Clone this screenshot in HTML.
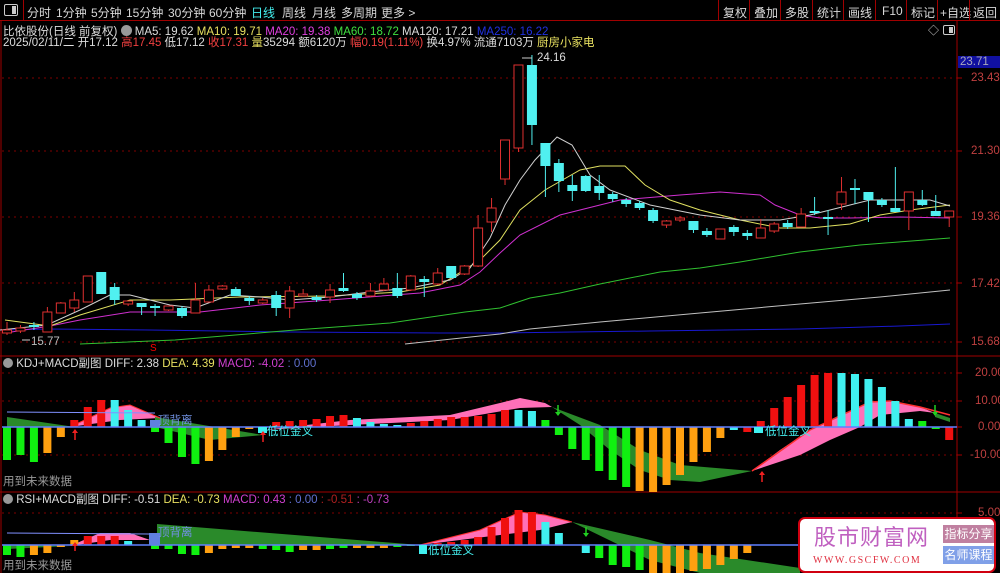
<!DOCTYPE html>
<html><head><meta charset="utf-8">
<style>
*{margin:0;padding:0;box-sizing:border-box}
body{width:1000px;height:573px;background:#000;overflow:hidden;position:relative;font-family:"Liberation Sans","Noto Sans CJK SC",sans-serif;font-size:11.5px;color:#ddd}
.t{position:absolute;white-space:nowrap;line-height:12px}
#tb{position:absolute;left:0;top:0;width:1000px;height:21px;border-bottom:1px solid #a00000;background:#000}
#tb span{position:absolute;top:4px;font-size:12px;color:#d8d8d8}
.rb{position:absolute;top:0;height:21px;border-left:1px solid #a00000}
svg{position:absolute;left:0;top:0}
</style></head><body>
<div id="tb">
<div style="position:absolute;left:4px;top:4px;width:14px;height:12px;border:1px solid #ccc;border-radius:2px"><div style="position:absolute;right:1px;top:1px;width:4px;height:8px;background:#ccc"></div></div>
<div class="rb" style="left:23px"></div>
<span style="left:27px">分时</span><span style="left:56px">1分钟</span><span style="left:91px">5分钟</span><span style="left:126px">15分钟</span><span style="left:168px">30分钟</span><span style="left:209px">60分钟</span><span style="left:251px;color:#4ee">日线</span><span style="left:282px">周线</span><span style="left:312px">月线</span><span style="left:341px">多周期</span><span style="left:381px">更多 &gt;</span>
<div class="rb" style="left:718px"></div><span style="left:723px">复权</span>
<div class="rb" style="left:749px"></div><span style="left:754px">叠加</span>
<div class="rb" style="left:780px"></div><span style="left:785px">多股</span>
<div class="rb" style="left:812px"></div><span style="left:817px">统计</span>
<div class="rb" style="left:843px"></div><span style="left:848px">画线</span>
<div class="rb" style="left:875px"></div><span style="left:882px">F10</span>
<div class="rb" style="left:906px"></div><span style="left:911px">标记</span>
<div class="rb" style="left:937px"></div><span style="left:940px">+自选</span>
<div class="rb" style="left:969px"></div><span style="left:973px">返回</span>
</div>
<svg id="s" width="1000" height="573" viewBox="0 0 1000 573"></svg>
<div class="t" style="left:3px;top:25px">比依股份(日线 前复权) <span style="display:inline-block;width:11px;height:11px;border-radius:50%;background:#999;vertical-align:-1px"></span> MA5: 19.62 <span style="color:#e8e060">MA10: 19.71</span> <span style="color:#e040e0">MA20: 19.38</span> <span style="color:#40e040">MA60: 18.72</span> MA120: 17.21 <span style="color:#2030e0">MA250: 16.22</span></div>
<div class="t" style="left:3px;top:37px">2025/02/11/二 开17.12 <span style="color:#f04040">高17.45</span> 低17.12 <span style="color:#f04040">收17.31</span> <span style="color:#e8e060">量</span>35294 额6120万 <span style="color:#f04040">幅0.19(1.11%)</span> 换4.97% 流通7103万 <span style="color:#e8e060">厨房小家电</span></div>
<div class="t" style="left:928px;top:25px;color:#ccc;font-size:11px">◇</div>
<div style="position:absolute;left:943px;top:25px;width:12px;height:10px;border:1px solid #ccc;border-radius:2px"><div style="position:absolute;right:1px;top:1px;width:4px;height:6px;background:#ccc"></div></div>
<div class="t" style="left:958px;top:56px;width:42px;height:12px;background:#1010a0;color:#aab;padding-left:2px">23.71</div>
<div class="t" style="left:971px;top:72px;color:#c04040">23.43</div>
<div class="t" style="left:971px;top:145px;color:#c04040">21.30</div>
<div class="t" style="left:971px;top:211px;color:#c04040">19.36</div>
<div class="t" style="left:971px;top:278px;color:#c04040">17.42</div>
<div class="t" style="left:971px;top:336px;color:#c04040">15.68</div>
<div class="t" style="left:537px;top:52px;color:#ddd">24.16</div>
<div class="t" style="left:31px;top:336px;color:#bbb">15.77</div>
<div class="t" style="left:150px;top:343px;color:#f00;font-size:10px">S</div>
<div class="t" style="left:3px;top:358px"><span style="display:inline-block;width:10px;height:10px;border-radius:50%;background:#999;vertical-align:-1px"></span> KDJ+MACD副图 DIFF: 2.38 <span style="color:#e8e060">DEA: 4.39</span> <span style="color:#d040d0">MACD: -4.02</span> <span style="color:#6070d0">: 0.00</span></div>
<div class="t" style="left:3px;top:476px;color:#999">用到未来数据</div>
<div class="t" style="left:3px;top:494px"><span style="display:inline-block;width:10px;height:10px;border-radius:50%;background:#999;vertical-align:-1px"></span> RSI+MACD副图 DIFF: -0.51 <span style="color:#e8e060">DEA: -0.73</span> <span style="color:#d040d0">MACD: 0.43</span> <span style="color:#6070d0">: 0.00</span> <span style="color:#b02020">: -0.51</span> <span style="color:#c040c0">: -0.73</span></div>
<div class="t" style="left:3px;top:560px;color:#999">用到未来数据</div>
<div class="t" style="left:975px;top:367px;color:#c04040">20.00</div>
<div class="t" style="left:975px;top:395px;color:#c04040">10.00</div>
<div class="t" style="left:978px;top:421px;color:#c04040">0.00</div>
<div class="t" style="left:970px;top:449px;color:#c04040">-10.00</div>
<div class="t" style="left:978px;top:507px;color:#c04040">5.00</div>
<div class="t" style="left:158px;top:415px;color:#7090e0">顶背离</div>
<div class="t" style="left:267px;top:426px;color:#4ee">低位金叉</div>
<div class="t" style="left:765px;top:426px;color:#4ee">低位金叉</div>
<div class="t" style="left:158px;top:527px;color:#7090e0">顶背离</div>
<div class="t" style="left:428px;top:545px;color:#4ee">低位金叉</div>
<div style="position:absolute;left:798px;top:517px;width:198px;height:56px;background:#fff;border:2px solid #d00010;border-radius:7px">
<div class="t" style="left:14px;top:6px;font-size:22px;line-height:26px;color:#c060c0;letter-spacing:1px">股市财富网</div>
<div class="t" style="left:13px;top:36px;font-family:'Liberation Serif',serif;font-size:10px;color:#e03040;letter-spacing:1.5px">WWW.GSCFW.COM</div>
<div class="t" style="left:143px;top:6px;width:51px;height:18px;line-height:18px;background:#c080a0;color:#fff;font-size:12px;text-align:center">指标分享</div>
<div class="t" style="left:143px;top:27px;width:51px;height:18px;line-height:18px;background:#80a0e8;color:#fff;font-size:12px;text-align:center">名师课程</div>
</div>
<script>
var s=document.getElementById('s'),h='';
function X(i){return 7+i*13.46}
function L(x1,y1,x2,y2,c,w,d){h+='<line x1="'+x1+'" y1="'+y1+'" x2="'+x2+'" y2="'+y2+'" stroke="'+c+'" stroke-width="'+(w||1)+'"'+(d?' stroke-dasharray="'+d+'"':'')+'/>'}
function P(pts,c,w){h+='<polyline fill="none" stroke="'+c+'" stroke-width="'+(w||1)+'" points="'+pts.map(p=>p.join(',')).join(' ')+'"/>'}
function G(pts,c){h+='<polygon fill="'+c+'" points="'+pts.map(p=>p.join(',')).join(' ')+'"/>'}
L(1,21,1,573,'#a00000');L(957,21,957,573,'#a00000');
L(0,356,1000,356,'#a00000');L(0,492,1000,492,'#a00000');
[78,151,217,283,342].forEach(y=>L(2,y,957,y,'#800000',1,'2,4'));
[373,401,455].forEach(y=>L(2,y,957,y,'#800000',1,'2,4'));
L(2,513,957,513,'#800000',1,'2,4');
[78,151,217,283,342,373,401,427,455,513].forEach(y=>L(957,y,962,y,'#a00000'));
P([[0,330],[50,329],[150,330],[290,332],[440,333],[500,333],[650,331],[800,329],[900,326],[950,324]],'#1818d0');
P([[405,344],[480,336],[500,334],[530,329],[600,322],[700,313],[800,304],[880,297],[950,290]],'#c0c0c0');
P([[80,344],[175,340],[295,330],[390,323],[465,312],[500,308],[530,298],[560,293],[600,284],[660,272],[700,268],[740,262],[800,252],[860,245],[950,238]],'#30c030');
P([[5,333],[50,326],[80,320],[130,312],[200,312],[260,305],[330,300],[420,293],[460,285],[480,272],[500,253],[520,235],[560,215],[620,200],[680,195],[720,192],[760,195],[775,205],[800,215],[820,218],[850,218],[900,217],[950,218]],'#d030d0');
P([[5,320],[50,326],[80,315],[130,300],[170,300],[240,297],[330,296],[400,292],[440,285],[480,260],[500,240],[520,210],[545,190],[580,170],[600,166],[625,166],[645,185],[670,200],[700,210],[740,220],[780,228],[810,228],[850,224],[880,215],[910,210],[950,205]],'#e0e060');
P([[0,330],[47,325],[80,310],[110,295],[130,295],[150,300],[170,305],[195,308],[230,295],[260,297],[290,300],[330,297],[370,292],[410,288],[450,280],[470,268],[490,238],[505,205],[520,180],[535,160],[557,137],[572,145],[590,175],[610,190],[650,205],[700,215],[740,220],[780,220],[810,215],[830,210],[850,205],[870,200],[900,200],[930,200],[950,206]],'#d0d0d0');
var C=[[330,333,322,335,'r'],[328,331,325,333,'r'],[325,327,322,330,'c'],[312,332,307,332,'r'],[303,313,302,313,'r'],[300,308,292,312,'r'],[276,302,276,302,'r'],[272,294,272,294,'c'],[287,300,283,305,'c'],[301,304,301,306,'r'],[303,307,303,315,'c'],[306,308,304,316,'c'],[306,310,306,311,'r'],[308,316,306,318,'c'],[300,313,283,313,'r'],[290,302,285,302,'r'],[286,289,285,290,'r'],[289,296,287,296,'c'],[298,301,296,305,'c'],[300,303,298,304,'r'],[295,308,291,316,'c'],[291,308,286,318,'r'],[294,296,289,297,'r'],[297,300,295,302,'c'],[290,297,284,303,'r'],[288,291,273,292,'c'],[294,298,292,300,'c'],[291,296,283,297,'r'],[284,290,278,291,'r'],[288,296,273,298,'c'],[276,290,275,291,'r'],[279,282,276,297,'c'],[273,284,268,285,'r'],[266,278,266,278,'c'],[266,274,265,275,'r'],[228,266,215,267,'r'],[208,222,198,232,'r'],[140,179,140,185,'r'],[65,148,65,152,'r'],[65,125,55,145,'c'],[143,166,143,197,'c'],[163,181,159,192,'c'],[185,191,175,201,'c'],[176,191,175,192,'c'],[186,193,175,200,'c'],[194,199,192,202,'c'],[200,204,198,207,'c'],[203,208,201,210,'c'],[210,221,208,223,'c'],[221,225,220,228,'r'],[218,220,216,222,'r'],[221,230,221,233,'c'],[231,235,228,237,'c'],[229,239,229,239,'r'],[227,232,225,236,'c'],[233,236,230,240,'c'],[228,238,219,238,'r'],[224,231,222,233,'r'],[223,227,220,229,'c'],[214,227,208,227,'r'],[211,213,197,215,'c'],[217,219,210,235,'c'],[192,204,177,210,'r'],[188,190,179,204,'c'],[192,200,192,222,'c'],[200,205,198,207,'c'],[208,212,167,212,'c'],[192,211,192,230,'r'],[200,205,190,206,'c'],[211,216,195,216,'c'],[211,217,211,227,'r']];
C.forEach((c,i)=>{var x=X(i),col=c[4]=='r'?'#e03030':'#50f0f0';
L(x,c[2],x,c[3],col);
if(c[4]=='r')h+='<rect x="'+(x-4.5)+'" y="'+c[0]+'" width="9" height="'+Math.max(1,c[1]-c[0])+'" fill="#000" stroke="'+col+'"/>';
else h+='<rect x="'+(x-5)+'" y="'+c[0]+'" width="10" height="'+Math.max(2,c[1]-c[0])+'" fill="'+col+'"/>';});
L(522,58,532,58,'#ccc');L(22,340,30,340,'#ccc');
var z=427;
G([[7,417],[75,427],[7,427]],'#2a8a2a');
G([[70,427],[110,408],[130,405],[160,418],[120,420]],'#ff70b8');
G([[155,417],[263,435],[210,440],[155,427]],'#2a8a2a');
G([[263,430],[350,420],[450,415],[500,403],[520,398],[545,403],[552,407],[520,408],[450,420],[350,425]],'#ff70b8');
G([[552,407],[600,425],[640,450],[680,465],[752,471],[700,482],[670,480],[640,470],[610,450],[580,425]],'#2a8a2a');
G([[752,471],[780,450],[810,430],[840,415],[870,402],[890,401],[920,407],[935,413],[920,411],[880,415],[860,427],[830,440],[800,455]],'#ff70b8');
G([[935,413],[950,418],[950,422],[935,417]],'#2a8a2a');
P([[70,427],[110,408],[130,405],[160,418]],'#ff3030');P([[752,471],[810,430],[870,402],[890,401],[920,407],[950,415]],'#ff3030',1.5);
var K=[-33,-28,-35,-26,-10,7,20,27,27,17,7,-5,-16,-30,-37,-34,-23,-10,-2,-4,5,6,7,8,11,12,9,5,3,2,4,6,8,10,10,11,13,17,17,16,7,-8,-22,-33,-44,-53,-60,-64,-65,-58,-48,-35,-25,-11,-3,-5,6,19,30,42,52,54,54,53,48,40,26,8,6,-2,-13];
var KC='gggoorrrccc'+'gggg'+'oooo'+'c'+'rrrrrr'+'cccc'+'rrrrrrrr'+'cc'+'ggggggg'+'ooooooo'+'c'+'rrrrrrr'+'cccccc'+'gg';
function col(ch){return {g:'#10f010',o:'#ffa010',r:'#f01010',c:'#40f0f0'}[ch]}
K.forEach((v,i)=>{var x=X(i)-4;h+='<rect x="'+x+'" y="'+(v>0?z-v:z)+'" width="8" height="'+Math.abs(v)+'" fill="'+col(KC[i]||'r')+'"/>';});
L(2,z,957,z,'#6080ff',1.5);P([[7,412],[155,413]],'#8090ff');
h+='<rect x="150" y="420" width="10" height="7" fill="#6080e0"/><rect x="258" y="427" width="9" height="6" fill="#40f0f0"/><rect x="754" y="427" width="9" height="6" fill="#40f0f0"/>';
[[75,440],[263,442],[762,482]].forEach(a=>{L(a[0],a[1],a[0],a[1]-10,'#f02020',1.5);G([[a[0]-3,a[1]-7],[a[0],a[1]-11],[a[0]+3,a[1]-7]],'#f02020')});
[[558,405],[935,405]].forEach(a=>{L(a[0],a[1],a[0],a[1]+10,'#20d020',1.5);G([[a[0]-3,a[1]+7],[a[0],a[1]+11],[a[0]+3,a[1]+7]],'#20d020')});
z=545;
G([[7,549],[70,546],[7,545]],'#2a8a2a');
G([[70,546],[100,533],[130,533],[150,540],[110,540]],'#ff70b8');
G([[157,524],[420,545],[157,545]],'#2a8a2a');
G([[420,545],[480,530],[520,512],[545,515],[572,522],[540,530],[500,535]],'#ff70b8');
G([[572,522],[650,540],[700,553],[800,568],[800,573],[700,573],[650,560]],'#2a8a2a');
P([[420,545],[480,530],[520,512],[545,515],[572,522]],'#ff3030');
var R=[-10,-12,-10,-8,-2,5,9,9,9,4,0,-4,-4,-9,-10,-8,-4,-3,-3,-4,-5,-7,-5,-5,-4,-3,-3,-3,-3,-2,-1,0,2,3,5,8,18,27,35,33,23,12,0,-8,-13,-20,-22,-25,-28,-30,-28,-26,-24,-20,-14,-8];
var RC='ggoooorrrcc'+'gggg'+'oooo'+'ggg'+'ooggooogg'+'crrrrrrrrcccc'+'gggg'+'oooooooooooo';
R.forEach((v,i)=>{if(!v)return;var x=X(i)-4;h+='<rect x="'+x+'" y="'+(v>0?z-v:z)+'" width="8" height="'+Math.abs(v)+'" fill="'+col(RC[i]||'o')+'"/>';});
L(2,z,957,z,'#6080ff',1.5);P([[7,533],[150,534]],'#8090ff');
h+='<rect x="149" y="533" width="11" height="12" fill="#6080e0"/><rect x="419" y="545" width="8" height="9" fill="#40f0f0"/>';
[[75,551]].forEach(a=>{L(a[0],a[1],a[0],a[1]-8,'#f02020',1.5);G([[a[0]-3,a[1]-5],[a[0],a[1]-9],[a[0]+3,a[1]-5]],'#f02020')});
[[586,527]].forEach(a=>{L(a[0],a[1],a[0],a[1]+9,'#20d020',1.5);G([[a[0]-3,a[1]+6],[a[0],a[1]+10],[a[0]+3,a[1]+6]],'#20d020')});
s.innerHTML=h;
</script>
</body></html>
